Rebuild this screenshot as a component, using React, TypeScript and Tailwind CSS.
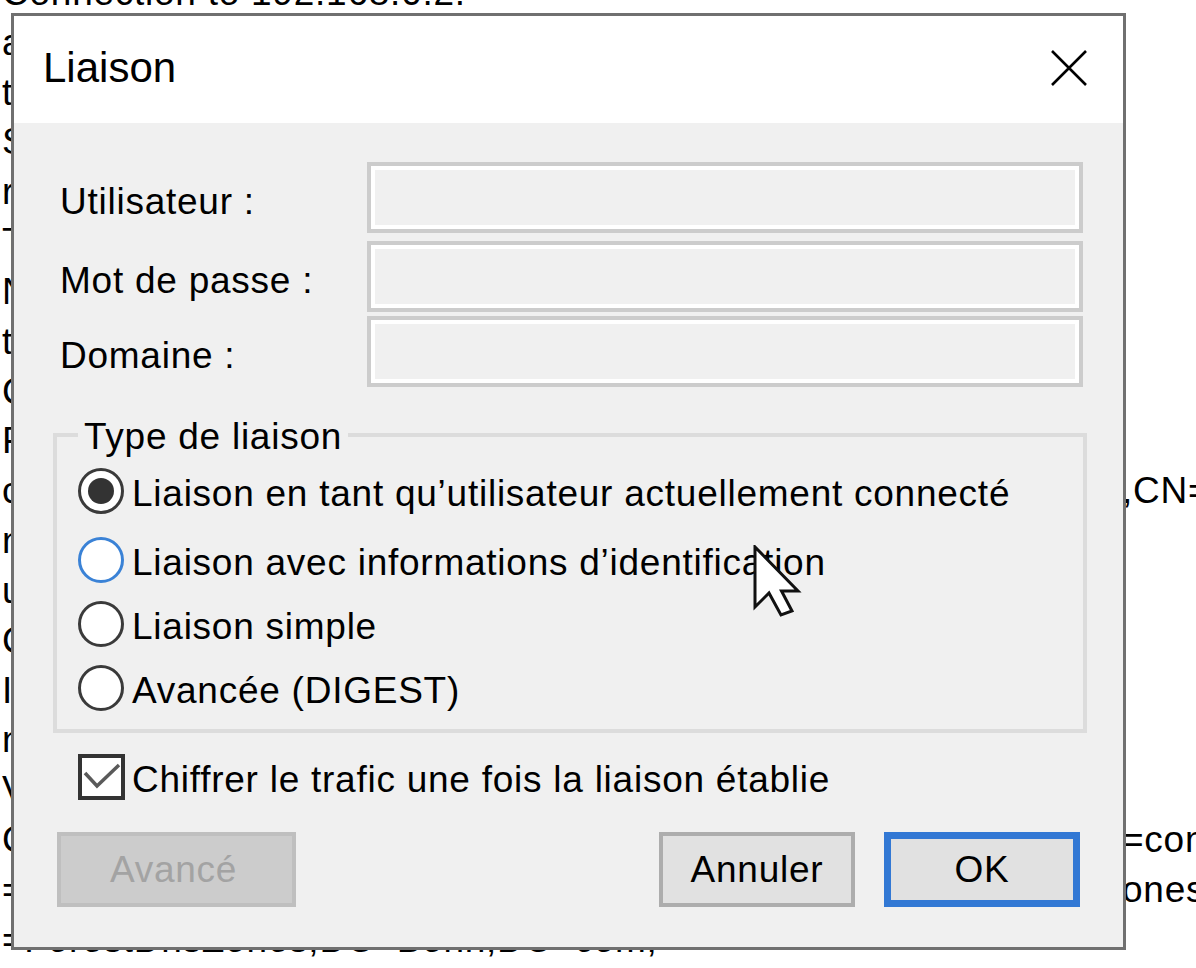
import React from "react";

// Background log text behind the dialog (ldp-style output)
const logLines: { left: string; right?: string }[] = [
  { left: "Connection to 192.168.0.2." },
  { left: "atteignable, version LDAP 3." },
  { left: "top; organizationalUnit;" },
  { left: "SupportedLDAPVersion: 3; 2;" },
  { left: "rootDomainNamingContext: DC=Bonn,DC=com;" },
  { left: "TRUE" },
  { left: "NTDS Settings" },
  { left: "tokenGroups" },
  { left: "CN=Schema,CN=Configuration" },
  { left: "Forest functionality" },
  { left: "configurationNamingContext: CN=Configuration", right: ",CN=Configuration,DC=Bonn" },
  { left: "namingContexts" },
  { left: "upToDateness" },
  { left: "CN=Aggregate" },
  { left: "IsSynchronized: TRUE;" },
  { left: "namingContexts (5)" },
  { left: "Version 3" },
  { left: "CN=Schema,CN=Configuration,DC=Bonn,DC", right: "=com;" },
  { left: "=Bonn,DC=com; DC=DomainDnsZ", right: "ones,DC=Bonn" },
  { left: "=ForestDnsZones,DC=Bonn,DC=com;" },
];

const radios = [
  { label: "Liaison en tant qu\u2019utilisateur actuellement connecté", checked: true, focus: false, mt: "mt-[31px]" },
  { label: "Liaison avec informations d\u2019identification", checked: false, focus: true, mt: "mt-[23px]" },
  { label: "Liaison simple", checked: false, focus: false, mt: "mt-[18px]" },
  { label: "Avancée (DIGEST)", checked: false, focus: false, mt: "mt-[18px]" },
];

const fields = [
  { label: "Utilisateur :", mt: "mt-[39px]" },
  { label: "Mot de passe :", mt: "mt-[8px]" },
  { label: "Domaine :", mt: "mt-[4px]" },
];

const Radio: React.FC<{ checked: boolean; focus: boolean }> = ({ checked, focus }) => (
  <div
    className={
      focus
        ? "w-[46px] h-[46px] shrink-0 rounded-full bg-white border-[3px] border-[#3a82d6] flex items-center justify-center"
        : "w-[46px] h-[46px] shrink-0 rounded-full bg-white border-[3px] border-[#3a3a3a] flex items-center justify-center"
    }
  >
    {checked && <div className="w-[26px] h-[26px] rounded-full bg-[#333333]" />}
  </div>
);

export default function App() {
  return (
    <div className="relative w-[1196px] h-[968px] overflow-hidden bg-white text-black font-['Liberation_Sans',Arial,sans-serif]">
      {/* log output */}
      <div className="mt-[-32px] pl-[2px] text-[37px] leading-[49.84px] tracking-[0.75px]">
        {logLines.map((line, i) => (
          <div key={i} className="flex h-[49.84px] whitespace-nowrap">
            {line.right ? (
              <>
                <span className="w-[1120px] shrink-0 overflow-hidden">{line.left}</span>
                <span>{line.right}</span>
              </>
            ) : (
              <span>{line.left}</span>
            )}
          </div>
        ))}
      </div>

      {/* dialog */}
      <div className="absolute left-[11px] top-[13px] w-[1115px] h-[937px] border-[3px] border-[#707070] bg-[#f0f0f0] flex flex-col">
        <div className="h-[107px] shrink-0 bg-white flex items-center justify-between pl-[29px] pr-[36px] pb-[4px]">
          <span className="text-[42px] leading-none">Liaison</span>
          <svg width="36" height="36" viewBox="0 0 36 36" className="mt-[1px]">
            <path d="M1 1 L35 35 M35 1 L1 35" stroke="#000" strokeWidth="2.6" />
          </svg>
        </div>

        <div className="flex-1 flex flex-col text-[37px] tracking-[0.75px]">
          {fields.map((f) => (
            <div key={f.label} className={`${f.mt} flex items-center pl-[46px]`}>
              <span className="w-[307px] shrink-0 pt-[9px]">{f.label}</span>
              <div className="w-[716px] h-[71px] border-4 border-[#cccccc] bg-[#f0f0f0] shadow-[inset_0_0_0_4px_#ffffff]" />
            </div>
          ))}

          {/* Type de liaison */}
          <div className="relative mt-[46px] ml-[39px] w-[1034px] h-[300px] border-4 border-[#dcdcdc] pl-[21px]">
            <span className="absolute left-[21px] top-[-21px] px-[6px] pr-[6px] bg-[#f0f0f0] leading-[42px]">
              Type de liaison
            </span>
            {radios.map((r) => (
              <div key={r.label} className={`${r.mt} flex items-start h-[46px]`}>
                <Radio checked={r.checked} focus={r.focus} />
                <span className="ml-[8px] leading-[40px] pt-[6px] whitespace-nowrap">{r.label}</span>
              </div>
            ))}
          </div>

          {/* encryption checkbox */}
          <div className="mt-[21px] ml-[64px] flex items-start h-[46px]">
            <div className="w-[47px] h-[46px] shrink-0 border-4 border-[#333333] bg-white">
              <svg width="39" height="38" viewBox="0 0 39 38">
                <path d="M3 15 L15 28 L37 7" fill="none" stroke="#5a5a5a" strokeWidth="3.5" />
              </svg>
            </div>
            <span className="ml-[7px] leading-[40px] pt-[6px] whitespace-nowrap">
              Chiffrer le trafic une fois la liaison établie
            </span>
          </div>

          {/* buttons */}
          <div className="mt-[32px] px-[43px] flex justify-between">
            <div className="w-[239px] h-[75px] border-4 border-[#bfbfbf] bg-[#cccccc] text-[#a3a3a3] flex items-center justify-center pr-[6px]">
              Avancé
            </div>
            <div className="flex gap-[29px]">
              <div className="w-[196px] h-[75px] border-4 border-[#adadad] bg-[#e1e1e1] flex items-center justify-center">
                Annuler
              </div>
              <div className="w-[196px] h-[75px] border-[7px] border-[#3278d4] bg-[#e1e1e1] flex items-center justify-center">
                OK
              </div>
            </div>
          </div>
        </div>
      </div>

      {/* mouse pointer */}
      <svg width="50" height="74" viewBox="0 0 50 74" className="absolute left-[753px] top-[545px]">
        <path
          d="M2 2 L2 62 L16 48 L28 70 L39 66 L28.5 46 L45 46 Z"
          fill="#ffffff"
          stroke="#111111"
          strokeWidth="3"
          strokeLinejoin="miter"
        />
      </svg>
    </div>
  );
}
